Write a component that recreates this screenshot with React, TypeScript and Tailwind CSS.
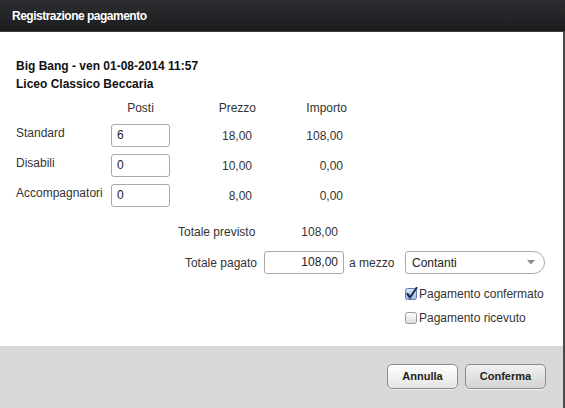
import React from 'react';

const rows = [
  { label: 'Standard', posti: '6', prezzo: '18,00', importo: '108,00' },
  { label: 'Disabili', posti: '0', prezzo: '10,00', importo: '0,00' },
  { label: 'Accompagnatori', posti: '0', prezzo: '8,00', importo: '0,00' },
];

const CheckBox = ({ checked }: { checked: boolean }) => (
  <svg width="14" height="14" viewBox="0 0 14 14" className="shrink-0">
    <defs>
      <linearGradient id={checked ? 'cbOn' : 'cbOff'} x1="0" y1="0" x2="0" y2="1">
        <stop offset="0" stopColor={checked ? '#dce8f7' : '#ffffff'} />
        <stop offset="1" stopColor={checked ? '#9fbde3' : '#dcdcdc'} />
      </linearGradient>
    </defs>
    <rect x="1.5" y="1.5" width="11" height="11" rx="2" fill={`url(#${checked ? 'cbOn' : 'cbOff'})`} stroke={checked ? '#5a7db0' : '#9a9a9a'} />
    {checked && <path d="M3.5 7 L6 10.5 L12.5 1" fill="none" stroke="#1d2f5a" strokeWidth="2.2" strokeLinecap="round" strokeLinejoin="round" />}
  </svg>
);

export default function App() {
  return (
    <div className="w-[565px] h-[408px] flex flex-col text-[12px] text-[#333]" style={{ fontFamily: '"Liberation Sans", Arial, sans-serif' }}>
      {/* title bar */}
      <div className="h-[32px] shrink-0 flex items-center pl-[12px] bg-gradient-to-b from-[#2c2e31] to-[#1b1d1f] border-b border-[#3a3c3e]">
        <span className="text-white font-bold text-[12px] tracking-[-0.5px]">Registrazione pagamento</span>
      </div>

      <div className="flex-1 flex flex-col border-r-2 border-[#4a4a4a]">
        {/* body */}
        <div className="h-[314px] bg-white pl-[16px] pt-[25px]">
          <div className="font-bold text-[#111] leading-[18px]">
            <div>Big Bang - ven 01-08-2014 11:57</div>
            <div>Liceo Classico Beccaria</div>
          </div>

          <div className="grid grid-cols-[95px_59px_86px_91px] mt-[5px]">
            <div className="h-[20px]" />
            <div className="h-[20px] leading-[20px] text-center">Posti</div>
            <div className="h-[20px] leading-[20px] text-right">Prezzo</div>
            <div className="h-[20px] leading-[20px] text-right">Importo</div>
          </div>

          <div className="flex flex-col gap-[7px] mt-[6px]">
            {rows.map((r) => (
              <div key={r.label} className="grid grid-cols-[95px_59px_82px_91px] h-[23px]">
                <div className="leading-[18px]">{r.label}</div>
                <div className="h-[23px] border border-[#a9a9a9] rounded-[3px] pl-[5px] leading-[21px] text-[#222]">{r.posti}</div>
                <div className="leading-[24px] text-right">{r.prezzo}</div>
                <div className="leading-[24px] text-right">{r.importo}</div>
              </div>
            ))}
          </div>

          <div className="flex mt-[16px] h-[18px] leading-[18px]">
            <div className="ml-[162px] w-[120px]">Totale previsto</div>
            <div className="w-[40px] text-right">108,00</div>
          </div>

          <div className="flex items-center mt-[10px] h-[23px]">
            <div className="w-[241px] text-right">Totale pagato</div>
            <div className="ml-[7px] w-[80px] h-[23px] border border-[#a9a9a9] rounded-[3px] pr-[5px] text-right leading-[21px] text-[#222]">108,00</div>
            <div className="w-[61px] pl-[5px]">a mezzo</div>
            <div className="w-[140px] h-[23px] border border-[#a9a9a9] rounded-l-[3px] rounded-r-[12px] flex items-center justify-between pl-[6px] pr-[9px] text-[#222]">
              <span>Contanti</span>
              <svg width="8" height="5" viewBox="0 0 8 5">
                <path d="M0 0 L8 0 L4 4.5 Z" fill="#8a8a8a" />
              </svg>
            </div>
          </div>

          <div className="flex flex-col gap-[10px] mt-[13px] pl-[388px]">
            <label className="flex items-center h-[14px]">
              <CheckBox checked />
              <span className="ml-[1px]">Pagamento confermato</span>
            </label>
            <label className="flex items-center h-[14px]">
              <CheckBox checked={false} />
              <span className="ml-[1px]">Pagamento ricevuto</span>
            </label>
          </div>
        </div>

        {/* footer */}
        <div className="flex-1 bg-[#d8d8d8] flex justify-end items-start pt-[18px] pr-[17px] gap-[7px]">
          <button className="w-[71px] h-[25px] rounded-[5px] border border-[#8c8c8c] bg-gradient-to-b from-[#ffffff] to-[#e4e4e4] font-bold text-[11px] text-[#222] shadow-[0_1px_0_rgba(255,255,255,0.6)]">
            Annulla
          </button>
          <button className="w-[81px] h-[25px] rounded-[5px] border border-[#8c8c8c] bg-gradient-to-b from-[#f2f2f2] to-[#d2d2d2] font-bold text-[11px] text-[#222] shadow-[0_1px_0_rgba(255,255,255,0.6)]">
            Conferma
          </button>
        </div>
      </div>
    </div>
  );
}
